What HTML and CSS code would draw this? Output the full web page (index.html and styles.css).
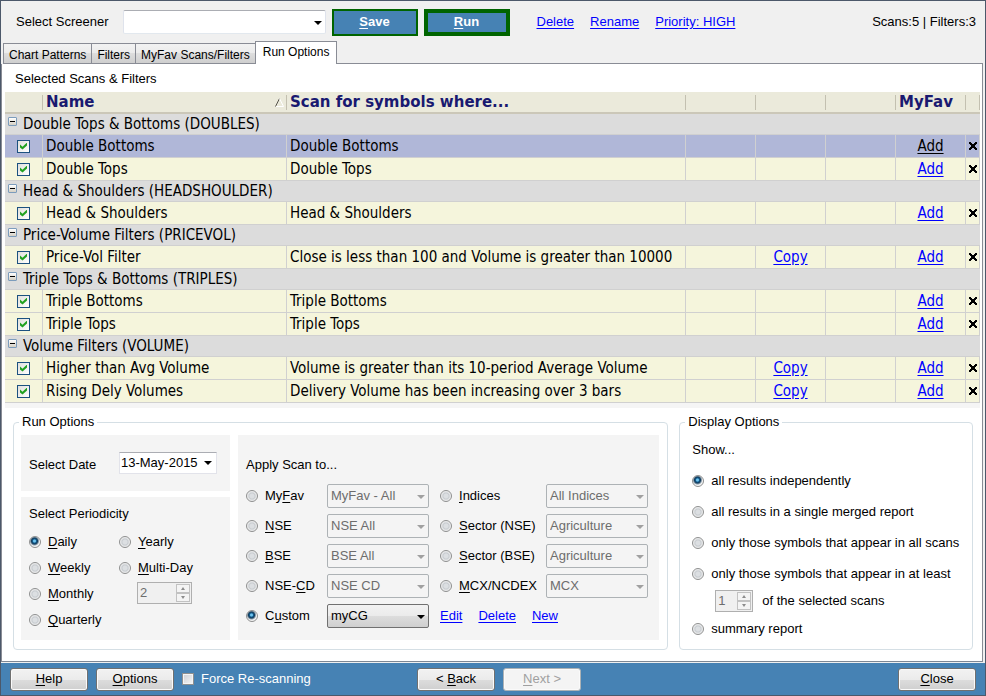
FILE: index.html
```html
<!DOCTYPE html>
<html lang="en">
<head>
<meta charset="utf-8">
<title>Screener</title>
<link rel="stylesheet" href="styles.css">
</head>
<body>
<div class="window">
  <header class="toolbar">
    <label for="screener">Select Screener</label>
    <span class="combo screener"><select id="screener"><option></option></select></span>
    <button class="action save" type="button"><u>S</u>ave</button>
    <button class="action run" type="button"><u>R</u>un</button>
    <nav class="links">
      <a href="#delete">Delete</a>
      <a href="#rename">Rename</a>
      <a href="#priority">Priority: HIGH</a>
    </nav>
    <span class="counts">Scans:5 | Filters:3</span>
  </header>

  <div class="tabs" role="tablist">
    <button class="tab" role="tab" type="button">Chart Patterns</button>
    <button class="tab" role="tab" type="button">Filters</button>
    <button class="tab" role="tab" type="button">MyFav Scans/Filters</button>
    <button class="tab active" role="tab" type="button" aria-selected="true">Run Options</button>
    <span class="tab-fill"></span>
  </div>

  <main class="panel">
    <h1 class="caption">Selected Scans &amp; Filters</h1>
    <div class="grid-wrap">
    <table class="scans">
      <colgroup>
        <col class="c-check"><col class="c-name"><col><col class="c-act"><col class="c-act"><col class="c-act"><col class="c-act"><col class="c-del">
      </colgroup>
      <thead>
        <tr><th></th><th><span class="sort">Name<svg width="9" height="9" viewBox="0 0 9 9" aria-hidden="true"><path d="M4.5 .5L.5 8.5" stroke="#55534a" fill="none"/><path d="M4.5 .5L8.5 8.5H1" stroke="#fff" fill="none"/></svg></span></th><th>Scan for symbols where...</th><th></th><th></th><th></th><th>MyFav</th><th></th></tr>
      </thead>
      <tbody>
        <tr class="group"><th colspan="8"><div><button class="fold" type="button" aria-label="Collapse"></button>Double Tops &amp; Bottoms (DOUBLES)</div></th></tr>
        <tr class="selected"><td><input class="tick" type="checkbox" checked aria-label="Double Bottoms"></td><td>Double Bottoms</td><td>Double Bottoms</td><td></td><td></td><td></td><td><a href="#add">Add</a></td><td><button class="del" type="button" aria-label="Remove"></button></td></tr>
        <tr><td><input class="tick" type="checkbox" checked aria-label="Double Tops"></td><td>Double Tops</td><td>Double Tops</td><td></td><td></td><td></td><td><a href="#add">Add</a></td><td><button class="del" type="button" aria-label="Remove"></button></td></tr>
        <tr class="group"><th colspan="8"><div><button class="fold" type="button" aria-label="Collapse"></button>Head &amp; Shoulders (HEADSHOULDER)</div></th></tr>
        <tr><td><input class="tick" type="checkbox" checked aria-label="Head &amp; Shoulders"></td><td>Head &amp; Shoulders</td><td>Head &amp; Shoulders</td><td></td><td></td><td></td><td><a href="#add">Add</a></td><td><button class="del" type="button" aria-label="Remove"></button></td></tr>
        <tr class="group"><th colspan="8"><div><button class="fold" type="button" aria-label="Collapse"></button>Price-Volume Filters (PRICEVOL)</div></th></tr>
        <tr><td><input class="tick" type="checkbox" checked aria-label="Price-Vol Filter"></td><td>Price-Vol Filter</td><td>Close is less than 100 and Volume is greater than 10000</td><td></td><td><a href="#copy">Copy</a></td><td></td><td><a href="#add">Add</a></td><td><button class="del" type="button" aria-label="Remove"></button></td></tr>
        <tr class="group"><th colspan="8"><div><button class="fold" type="button" aria-label="Collapse"></button>Triple Tops &amp; Bottoms (TRIPLES)</div></th></tr>
        <tr><td><input class="tick" type="checkbox" checked aria-label="Triple Bottoms"></td><td>Triple Bottoms</td><td>Triple Bottoms</td><td></td><td></td><td></td><td><a href="#add">Add</a></td><td><button class="del" type="button" aria-label="Remove"></button></td></tr>
        <tr><td><input class="tick" type="checkbox" checked aria-label="Triple Tops"></td><td>Triple Tops</td><td>Triple Tops</td><td></td><td></td><td></td><td><a href="#add">Add</a></td><td><button class="del" type="button" aria-label="Remove"></button></td></tr>
        <tr class="group"><th colspan="8"><div><button class="fold" type="button" aria-label="Collapse"></button>Volume Filters (VOLUME)</div></th></tr>
        <tr><td><input class="tick" type="checkbox" checked aria-label="Higher than Avg Volume"></td><td>Higher than Avg Volume</td><td>Volume is greater than its 10-period Average Volume</td><td></td><td><a href="#copy">Copy</a></td><td></td><td><a href="#add">Add</a></td><td><button class="del" type="button" aria-label="Remove"></button></td></tr>
        <tr><td><input class="tick" type="checkbox" checked aria-label="Rising Dely Volumes"></td><td>Rising Dely Volumes</td><td>Delivery Volume has been increasing over 3 bars</td><td></td><td><a href="#copy">Copy</a></td><td></td><td><a href="#add">Add</a></td><td><button class="del" type="button" aria-label="Remove"></button></td></tr>
      </tbody>
    </table>
    </div>

    <div class="options">
      <fieldset class="run-options">
        <legend>Run Options</legend>
        <div class="run-body">
          <div class="side">
            <div class="box date-box">
              <label for="date">Select Date</label>
              <span class="date"><input id="date" type="text" value="13-May-2015"><button type="button" aria-label="Open calendar"></button></span>
            </div>
            <div class="box period-box">
              <h2>Select Periodicity</h2>
              <div class="periods">
                <div>
                  <label class="radio"><input type="radio" name="period" checked><span><u>D</u>aily</span></label>
                  <label class="radio"><input type="radio" name="period"><span><u>W</u>eekly</span></label>
                  <label class="radio"><input type="radio" name="period"><span><u>M</u>onthly</span></label>
                  <label class="radio"><input type="radio" name="period"><span><u>Q</u>uarterly</span></label>
                </div>
                <div>
                  <label class="radio"><input type="radio" name="period"><span><u>Y</u>early</span></label>
                  <label class="radio"><input type="radio" name="period"><span><u>M</u>ulti-Day</span></label>
                  <span class="spin days"><input type="text" value="2" disabled aria-label="Number of days"><span class="arrows"><i></i><i></i></span></span>
                </div>
              </div>
            </div>
          </div>
          <div class="box apply-box">
            <h2>Apply Scan to...</h2>
            <div class="apply">
              <label class="radio"><input type="radio" name="target"><span>My<u>F</u>av</span></label>
              <span class="combo"><select disabled aria-label="MyFav list"><option>MyFav - All</option></select></span>
              <label class="radio second"><input type="radio" name="target"><span><u>I</u>ndices</span></label>
              <span class="combo"><select disabled aria-label="Index"><option>All Indices</option></select></span>

              <label class="radio"><input type="radio" name="target"><span><u>N</u>SE</span></label>
              <span class="combo"><select disabled aria-label="NSE list"><option>NSE All</option></select></span>
              <label class="radio second"><input type="radio" name="target"><span><u>S</u>ector (NSE)</span></label>
              <span class="combo"><select disabled aria-label="NSE sector"><option>Agriculture</option></select></span>

              <label class="radio"><input type="radio" name="target"><span><u>B</u>SE</span></label>
              <span class="combo"><select disabled aria-label="BSE list"><option>BSE All</option></select></span>
              <label class="radio second"><input type="radio" name="target"><span><u>S</u>ector (BSE)</span></label>
              <span class="combo"><select disabled aria-label="BSE sector"><option>Agriculture</option></select></span>

              <label class="radio"><input type="radio" name="target"><span>NSE-<u>C</u>D</span></label>
              <span class="combo"><select disabled aria-label="NSE-CD list"><option>NSE CD</option></select></span>
              <label class="radio second"><input type="radio" name="target"><span><u>M</u>CX/NCDEX</span></label>
              <span class="combo"><select disabled aria-label="Commodity exchange"><option>MCX</option></select></span>

              <label class="radio"><input type="radio" name="target" checked><span>C<u>u</u>stom</span></label>
              <span class="combo live"><select aria-label="Custom group"><option>myCG</option></select></span>
              <nav class="links second custom-links"><a href="#edit">Edit</a><a href="#delete-group">Delete</a><a href="#new">New</a></nav>
            </div>
          </div>
        </div>
      </fieldset>

      <fieldset class="display-options">
        <legend>Display Options</legend>
        <p>Show...</p>
        <label class="radio"><input type="radio" name="show" checked><span>all results independently</span></label>
        <label class="radio"><input type="radio" name="show"><span>all results in a single merged report</span></label>
        <label class="radio"><input type="radio" name="show"><span>only those symbols that appear in all scans</span></label>
        <label class="radio"><input type="radio" name="show"><span>only those symbols that appear in at least</span></label>
        <div class="at-least">
          <span class="spin"><input id="least" type="text" value="1" disabled><span class="arrows"><i></i><i></i></span></span>
          <label for="least">of the selected scans</label>
        </div>
        <label class="radio"><input type="radio" name="show"><span>summary report</span></label>
      </fieldset>
    </div>
  </main>

  <footer class="footer">
    <div class="left">
      <button class="push" type="button"><u>H</u>elp</button>
      <button class="push" type="button"><u>O</u>ptions</button>
      <label class="force"><input type="checkbox">Force Re-scanning</label>
    </div>
    <div class="middle">
      <button class="push" type="button">&lt; <u>B</u>ack</button>
      <button class="push" type="button" disabled><u>N</u>ext &gt;</button>
    </div>
    <button class="push close" type="button"><u>C</u>lose</button>
  </footer>
</div>
</body>
</html>
```
FILE: styles.css
```css
* { box-sizing: border-box; }

body {
  margin: 0;
  background: #f0f0f0;
  color: #000;
  font: 13px/16px "Liberation Sans", Arial, sans-serif;
}

button, input, select { font: inherit; color: inherit; margin: 0; }
a { color: #00f; }
u { text-underline-offset: 2px; }
h1, h2, p { margin: 0; font-size: 13px; font-weight: normal; }

.window {
  display: flex;
  flex-direction: column;
  min-height: 100vh;
  border: 1px solid #4c586a;
}

/* Toolbar */
.toolbar {
  display: flex;
  align-items: center;
  height: 40px;
  padding: 2px 9px 0 15px;
}
.screener { width: 203px; margin: 0 6px 0 14px; }
.combo.screener select { border-color: #abadb3 #dfe3ec #e2e8ee; background: #fff; }
.action {
  width: 86px;
  height: 27px;
  padding: 0;
  border: 2px solid #006400;
  background: #4682b4;
  color: #fff;
  font-weight: bold;
}
.run { margin-left: 6px; border-width: 4px; }
.links { display: flex; gap: 16px; font-size: 13px; }
.links a { text-underline-offset: 2px; }
.toolbar .links { margin-left: 27px; }
.counts { margin-left: auto; }

/* Drop-downs */
.combo { position: relative; display: block; }
.combo select {
  display: block;
  width: 100%;
  height: 24px;
  padding: 0 16px 0 3px;
  border: 1px solid #adb2b5;
  border-radius: 2px;
  appearance: none;
  background: #f4f4f4;
  opacity: 1;
}
.combo select:disabled { color: #6d6d6d; }
.combo::after {
  content: "";
  position: absolute;
  top: 11px;
  right: 4px;
  border: 4px solid transparent;
  border-top-color: #a0a0a0;
  border-bottom: 0;
}
.combo.live::after, .screener::after { border-top-color: #000; }
.combo.live select {
  border-color: #707070;
  background: linear-gradient(#f2f2f2, #ebebeb 50%, #dddddd 50%, #cfcfcf);
}

/* Tabs */
.tabs { display: flex; align-items: flex-end; padding-left: 2px; height: 23px; }
.tab {
  height: 21px;
  padding: 2px 5px 0;
  border: 1px solid #898c95;
  border-right: 0;
  background: linear-gradient(#f2f2f2, #ebebeb 50%, #dddddd 50%, #cfcfcf);
  font-size: 12px;
  line-height: 16px;
}
.tab.active {
  height: 23px;
  padding: 0 7px 2px;
  border-right: 1px solid #898c95;
  border-bottom: 0;
  background: #fff;
}
.tab-fill { flex: 1; margin-right: 2px; border-bottom: 1px solid #898c95; }

.panel {
  flex: 1;
  margin-right: 2px;
  padding: 7px 2px 11px 3px;
  border: 1px solid #898c95;
  border-top: 0;
  border-bottom-color: #7d8794;
  background: #fff;
}
.caption { padding: 0 10px 5px; }

/* Scan list */
.grid-wrap { padding-bottom: 5px; background: #f5f5f5; }
.scans {
  width: 100%;
  table-layout: fixed;
  border-spacing: 0;
  font: 15px/20px "DejaVu Sans Condensed", "DejaVu Sans", sans-serif;
}
.c-check { width: 38px; }
.c-name { width: 244px; }
.c-act { width: 70px; }
.c-del { width: 14px; }
.scans th, .scans td { padding: 0 3px; white-space: nowrap; }
.scans thead th {
  height: 22px;
  border-bottom: 2px solid #cbc7b8;
  background: linear-gradient(#c3c0b0, #c3c0b0) right center / 1px 15px no-repeat #ebeadb;
  color: #191970;
  font: bold 15px/20px "DejaVu Sans", sans-serif;
  text-align: left;
}
.sort { display: flex; align-items: center; justify-content: space-between; }
.scans tbody td {
  height: 23px;
  border: solid #d0d0d0;
  border-width: 0 1px 1px 0;
  background: #f5f5dc;
}
.scans tbody .selected td { background: #b0b7d8; }
.scans .selected a { color: #000; }
.scans .group th {
  height: 21px;
  border-bottom: 1px solid #d0d0d0;
  background: #dcdcdc;
  font-weight: normal;
  text-align: left;
}
.group div { display: flex; }
.fold {
  width: 9px;
  height: 9px;
  margin: 3px 6px 0 0;
  padding: 0;
  border: 1px solid #7c9cbc;
  border-radius: 1px;
  background: linear-gradient(#000, #000) center / 5px 1px no-repeat, linear-gradient(#fff, #d5d0c4);
}
.scans td:nth-child(n+4), .scans td:first-child { text-align: center; }
.scans td:last-child { padding: 0; }
.scans a { text-underline-offset: 2px; }
.tick {
  display: block;
  width: 13px;
  height: 13px;
  margin: 0 auto;
  border: 1px solid #1c5180;
  appearance: none;
  background: linear-gradient(135deg, #e0e0dc, #fff);
}
.tick:checked::before {
  content: "";
  display: block;
  width: 7px;
  height: 7px;
  margin: 2px;
  background: #21a121;
  clip-path: polygon(0 28%, 36% 60%, 100% 0, 100% 42%, 36% 100%, 0 70%);
}
.del {
  display: block;
  width: 8px;
  height: 8px;
  margin: 0 auto;
  padding: 0;
  border: 0;
  background:
    linear-gradient(45deg, transparent 41%, #000 41%, #000 59%, transparent 59%),
    linear-gradient(-45deg, transparent 41%, #000 41%, #000 59%, transparent 59%);
}

/* Option groups */
.options {
  display: grid;
  grid-template-columns: minmax(0, 656fr) minmax(0, 294fr);
  gap: 11px;
  padding: 6px 7px 0 8px;
}
fieldset {
  min-width: 0;
  margin: 0;
  border: 1px solid #d5dfe5;
  border-radius: 4px;
}
legend { padding: 0 3px; }
.run-options { padding: 5px 8px 9px 7px; }
.display-options { padding: 4px 0 5px 12px; white-space: nowrap; }
.run-options legend { margin-left: -2px; }
.display-options legend { margin-left: -7px; }
.run-body { display: flex; gap: 8px; }
.side { display: flex; flex: none; flex-direction: column; gap: 6px; width: 209px; }
.box { padding: 0 8px; background: #f4f4f4; }
.date-box { display: flex; align-items: center; justify-content: space-between; height: 56px; padding: 4px 13px 0 8px; }
.date {
  display: flex;
  align-items: center;
  width: 98px;
  height: 22px;
  margin-bottom: 4px;
  border: 1px solid #e2e3ea;
  border-top-color: #abadb3;
  background: #fff;
}
.date input { flex: 1; min-width: 0; padding: 0 0 0 1px; border: 0; background: none; }
.date button { width: 16px; height: 18px; padding: 0; border: 0; background: none; }
.date button::before {
  content: "";
  display: block;
  width: 0;
  margin: 0 auto;
  border: 4px solid transparent;
  border-top-color: #000;
  border-bottom: 0;
}
.period-box { flex: 1; padding-top: 9px; padding-bottom: 7px; }
.periods { display: grid; grid-template-columns: 90px 1fr; padding-top: 7px; }
.radio { display: flex; align-items: center; gap: 7px; height: 26px; }
.radio input {
  width: 12px;
  height: 12px;
  border: 1px solid #8e8f8f;
  border-radius: 50%;
  appearance: none;
  background: radial-gradient(circle, #dcdfe2 0 2px, #c9cdd1 3px, #f4f4f4 5px);
}
.radio input:checked { background: radial-gradient(circle at 45% 40%, #6ec3ee 0 1px, #0f5a8c 2px, #123a5a 3px, #f4f4f4 5px); }
.spin {
  display: flex;
  width: 38px;
  height: 22px;
  padding: 1px;
  border: 1px solid #afafaf;
  background: #f0f0f0;
}
.spin input { flex: 1; min-width: 0; padding: 0 0 0 1px; border: 0; background: none; color: #6d6d6d; }
.arrows { display: flex; flex-direction: column; width: 14px; }
.arrows i { display: grid; flex: 1; place-items: center; border: 1px solid #c2c2c2; background: #f4f4f4; }
.arrows i::before { content: ""; border: 2px solid transparent; border-bottom: 3px solid #8c8c8c; border-top: 0; }
.arrows i:last-child::before { border-bottom: 0; border-top: 3px solid #8c8c8c; }
.days { width: 55px; margin: 1px 0 0 18px; }

.apply-box { flex: 1; padding-top: 22px; }
.apply {
  display: grid;
  grid-template-columns: 81px 102px 117px 102px;
  grid-auto-rows: 30px;
  align-items: center;
  padding-top: 8px;
  white-space: nowrap;
}
.second { padding-left: 11px; }
.custom-links { grid-column: span 2; }
.display-options p { height: 31px; line-height: 31px; }
.display-options .radio { height: 31px; }
.at-least { display: flex; align-items: center; gap: 9px; height: 24px; padding-left: 23px; }

/* Footer */
.footer {
  display: grid;
  grid-template-columns: 407fr auto 395fr;
  align-items: center;
  height: 32px;
  margin-top: 1px;
  padding: 0 9px;
  background: #4682b4;
}
.left, .middle { display: flex; align-items: center; gap: 8px; }
.push {
  width: 78px;
  height: 23px;
  padding: 0;
  border: 1px solid #707070;
  border-radius: 3px;
  background: linear-gradient(#f2f2f2, #ebebeb 50%, #dddddd 50%, #cfcfcf);
  box-shadow: inset 0 0 0 1px #fafafa;
}
.push:disabled { border-color: #adb2b5; background: #f4f4f4; color: #a0a0a0; }
.close { justify-self: end; }
.force { display: flex; align-items: center; gap: 7px; color: #fff; white-space: nowrap; }
.force input {
  width: 12px;
  height: 12px;
  border: 1px solid #8e8f8f;
  appearance: none;
  background: linear-gradient(135deg, #cbcfd5, #f6f6f6);
  box-shadow: inset 0 0 0 1px #f4f4f4;
}
```
